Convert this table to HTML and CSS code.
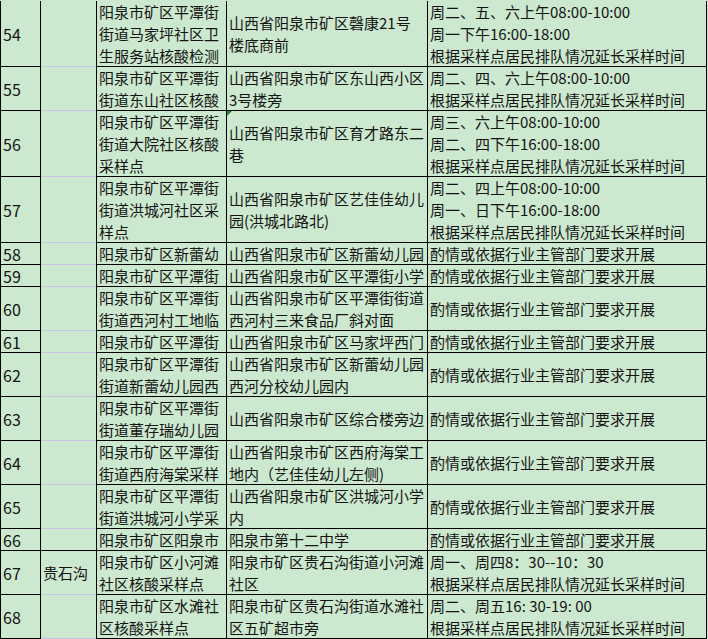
FILE: index.html
```html
<!DOCTYPE html>
<html lang="zh-CN">
<head>
<meta charset="utf-8">
<title>核酸采样点</title>
<link rel="stylesheet" href="styles.css">
</head>
<body>
<table class="sheet">
  <colgroup>
    <col class="c-no"><col class="c-area"><col class="c-name"><col class="c-addr"><col class="c-time">
  </colgroup>
  <tbody>
    <tr class="r3">
      <td class="no">54</td><td class="area"></td>
      <td>阳泉市矿区平潭街<br>街道马家坪社区卫<br>生服务站核酸检测</td>
      <td>山西省阳泉市矿区磬康21号<br>楼底商前</td>
      <td>周二、五、六上午08:00-10:00<br>周一下午16:00-18:00<br>根据采样点居民排队情况延长采样时间</td>
    </tr>
    <tr class="r2">
      <td class="no">55</td><td class="area"></td>
      <td>阳泉市矿区平潭街<br>街道东山社区核酸</td>
      <td>山西省阳泉市矿区东山西小区<br>3号楼旁</td>
      <td>周二、四、六上午08:00-10:00<br>根据采样点居民排队情况延长采样时间</td>
    </tr>
    <tr class="r3">
      <td class="no">56</td><td class="area"></td>
      <td>阳泉市矿区平潭街<br>街道大院社区核酸<br>采样点</td>
      <td class="flag">山西省阳泉市矿区育才路东二<br>巷</td>
      <td>周三、六上午08:00-10:00<br>周二、四下午16:00-18:00<br>根据采样点居民排队情况延长采样时间</td>
    </tr>
    <tr class="r3">
      <td class="no">57</td><td class="area"></td>
      <td>阳泉市矿区平潭街<br>街道洪城河社区采<br>样点</td>
      <td>山西省阳泉市矿区艺佳佳幼儿<br>园(洪城北路北)</td>
      <td>周二、四上午08:00-10:00<br>周一、日下午16:00-18:00<br>根据采样点居民排队情况延长采样时间</td>
    </tr>
    <tr class="r1">
      <td class="no">58</td><td class="area"></td>
      <td>阳泉市矿区新蕾幼</td>
      <td>山西省阳泉市矿区新蕾幼儿园</td>
      <td>酌情或依据行业主管部门要求开展</td>
    </tr>
    <tr class="r1">
      <td class="no">59</td><td class="area"></td>
      <td>阳泉市矿区平潭街</td>
      <td>山西省阳泉市矿区平潭街小学</td>
      <td>酌情或依据行业主管部门要求开展</td>
    </tr>
    <tr class="r2">
      <td class="no">60</td><td class="area"></td>
      <td>阳泉市矿区平潭街<br>街道西河村工地临</td>
      <td>山西省阳泉市矿区平潭街街道<br>西河村三来食品厂斜对面</td>
      <td>酌情或依据行业主管部门要求开展</td>
    </tr>
    <tr class="r1">
      <td class="no">61</td><td class="area"></td>
      <td>阳泉市矿区平潭街</td>
      <td>山西省阳泉市矿区马家坪西门</td>
      <td>酌情或依据行业主管部门要求开展</td>
    </tr>
    <tr class="r2">
      <td class="no">62</td><td class="area"></td>
      <td>阳泉市矿区平潭街<br>街道新蕾幼儿园西</td>
      <td>山西省阳泉市矿区新蕾幼儿园<br>西河分校幼儿园内</td>
      <td>酌情或依据行业主管部门要求开展</td>
    </tr>
    <tr class="r2">
      <td class="no">63</td><td class="area"></td>
      <td>阳泉市矿区平潭街<br>街道董存瑞幼儿园</td>
      <td>山西省阳泉市矿区综合楼旁边</td>
      <td>酌情或依据行业主管部门要求开展</td>
    </tr>
    <tr class="r2">
      <td class="no">64</td><td class="area"></td>
      <td>阳泉市矿区平潭街<br>街道西府海棠采样</td>
      <td>山西省阳泉市矿区西府海棠工<br>地内（艺佳佳幼儿左侧)</td>
      <td>酌情或依据行业主管部门要求开展</td>
    </tr>
    <tr class="r2">
      <td class="no">65</td><td class="area"></td>
      <td>阳泉市矿区平潭街<br>街道洪城河小学采</td>
      <td>山西省阳泉市矿区洪城河小学<br>内</td>
      <td>酌情或依据行业主管部门要求开展</td>
    </tr>
    <tr class="r1">
      <td class="no">66</td><td class="area area-end"></td>
      <td>阳泉市矿区阳泉市</td>
      <td>阳泉市第十二中学</td>
      <td>酌情或依据行业主管部门要求开展</td>
    </tr>
    <tr class="r2">
      <td class="no">67</td><td class="area">贵石沟</td>
      <td>阳泉市矿区小河滩<br>社区核酸采样点</td>
      <td>阳泉市矿区贵石沟街道小河滩<br>社区</td>
      <td>周一、周四8：30--10：30<br>根据采样点居民排队情况延长采样时间</td>
    </tr>
    <tr class="r2">
      <td class="no">68</td><td class="area"></td>
      <td>阳泉市矿区水滩社<br>区核酸采样点</td>
      <td>阳泉市矿区贵石沟街道水滩社<br>区五矿超市旁</td>
      <td>周二、周五16: 30-19: 00<br>根据采样点居民排队情况延长采样时间</td>
    </tr>
  </tbody>
</table>
</body>
</html>
```
FILE: styles.css
```css
html, body {
  margin: 0;
  padding: 0;
  background: #cce8cf;
}

body {
  padding-top: 1px;
  font-family: "Noto Sans CJK SC", "Microsoft YaHei", "Noto Sans", sans-serif;
  font-size: 15px;
  line-height: 22px;
  color: #141414;
}

.sheet {
  border-collapse: separate;
  border-spacing: 0;
  table-layout: fixed;
  width: 707px;
}

.c-no { width: 41px; }
.c-area { width: 56px; }
.c-name { width: 130px; }
.c-addr { width: 201px; }
.c-time { width: 279px; }

.sheet td {
  box-sizing: border-box;
  padding: 0 2px;
  border-right: 1px solid #000;
  box-shadow: inset 0 -1px 0 #000;
  vertical-align: middle;
  white-space: nowrap;
  overflow: hidden;
}

.sheet td.no {
  border-left: 1px solid #000;
  padding-left: 2px;
  font-size: 16px;
}

.sheet td.area {
  box-shadow: inset 0 -1px 0 #c5c5e3;
}

.sheet td.area-end {
  box-shadow: inset 0 -1px 0 #000;
}

.r1 { height: 22px; }
.r2 { height: 44px; }
.r3 { height: 66px; }

.sheet td.flag {
  position: relative;
}

.sheet td.flag::before {
  content: "";
  position: absolute;
  left: 0;
  top: 0;
  border-top: 5px solid #1a8a2e;
  border-right: 5px solid transparent;
}
```
